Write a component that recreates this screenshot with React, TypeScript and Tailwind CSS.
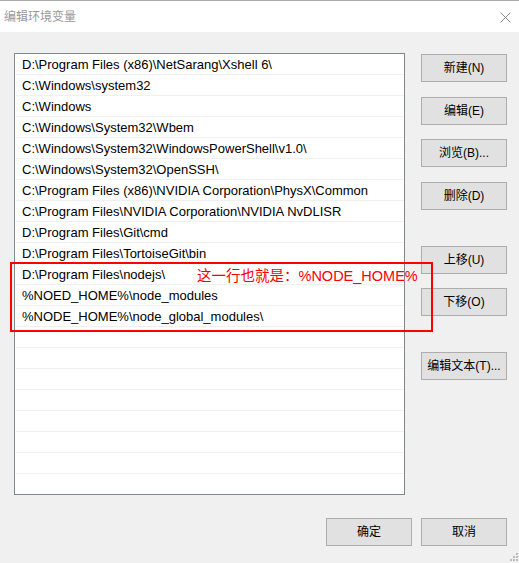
import React from "react";

const rows = [
  "D:\\Program Files (x86)\\NetSarang\\Xshell 6\\",
  "C:\\Windows\\system32",
  "C:\\Windows",
  "C:\\Windows\\System32\\Wbem",
  "C:\\Windows\\System32\\WindowsPowerShell\\v1.0\\",
  "C:\\Windows\\System32\\OpenSSH\\",
  "C:\\Program Files (x86)\\NVIDIA Corporation\\PhysX\\Common",
  "C:\\Program Files\\NVIDIA Corporation\\NVIDIA NvDLISR",
  "D:\\Program Files\\Git\\cmd",
  "D:\\Program Files\\TortoiseGit\\bin",
  "D:\\Program Files\\nodejs\\",
  "%NOED_HOME%\\node_modules",
  "%NODE_HOME%\\node_global_modules\\",
];

const allRows = [...rows, ...Array(8).fill("")];

function Btn({ label, className = "" }: { label: string; className?: string }) {
  return (
    <button className={`w-[86px] h-[28px] bg-[#e1e1e1] border border-[#adadad] text-[12px] text-black flex items-center justify-center ${className}`}>
      {label}
    </button>
  );
}

export default function App() {
  return (
    <div
      className="relative w-[519px] h-[563px] bg-[#f0f0f0] overflow-hidden"
      style={{ fontFamily: '"Liberation Sans", "Noto Sans CJK SC", sans-serif' }}
    >
      <div className="h-[32px] bg-white border-t border-[#ababab] flex items-center justify-between pl-[4px] pr-[8px]">
        <span className="text-[12px] text-[#999999]">编辑环境变量</span>
        <svg width="11" height="11" viewBox="0 0 11 11" className="mt-px">
          <path d="M0.5 0.5 L10.5 10.5 M10.5 0.5 L0.5 10.5" stroke="#8a8a8a" strokeWidth="1" fill="none" />
        </svg>
      </div>

      <div className="flex pl-[14px] pt-[21px]">
        <div className="w-[391px] h-[442px] border border-[#828790] bg-white overflow-hidden">
          {allRows.map((r, i) => (
            <div
              key={i}
              className="h-[21px] border-b border-[#f0f0f0] ml-px flex items-center pl-[6px] pt-[2px] text-[13px] leading-[16px] text-black whitespace-nowrap"
            >
              {r}
            </div>
          ))}
        </div>
        <div className="ml-[16px] flex flex-col">
          <Btn label="新建(N)" className="mt-px" />
          <Btn label="编辑(E)" className="mt-[15px]" />
          <Btn label="浏览(B)..." className="mt-[14px]" />
          <Btn label="删除(D)" className="mt-[15px]" />
          <Btn label="上移(U)" className="mt-[36px]" />
          <Btn label="下移(O)" className="mt-[14px]" />
          <Btn label="编辑文本(T)..." className="mt-[36px]" />
        </div>
      </div>

      <div className="flex justify-end gap-[9px] pr-[12px] mt-[23px]">
        <Btn label="确定" />
        <Btn label="取消" />
      </div>

      {/* annotation overlay */}
      <div className="absolute left-[10px] top-[262px] w-[423px] h-[70px] border-2 border-[#ff0000]" />
      <div className="absolute left-[197px] top-[266px] text-[14.5px] leading-[20px] text-[#ff0000] whitespace-nowrap">
        这一行也就是：%NODE_HOME%
      </div>

      {/* resize grip */}
      <div className="absolute left-[516px] top-[553px] w-[2px] h-[2px] bg-[#bcbcbc]" />
      <div className="absolute left-[513px] top-[556px] w-[2px] h-[2px] bg-[#bcbcbc]" />
      <div className="absolute left-[516px] top-[556px] w-[2px] h-[2px] bg-[#bcbcbc]" />
      <div className="absolute left-[510px] top-[559px] w-[2px] h-[2px] bg-[#bcbcbc]" />
      <div className="absolute left-[513px] top-[559px] w-[2px] h-[2px] bg-[#bcbcbc]" />
      <div className="absolute left-[516px] top-[559px] w-[2px] h-[2px] bg-[#bcbcbc]" />
    </div>
  );
}
